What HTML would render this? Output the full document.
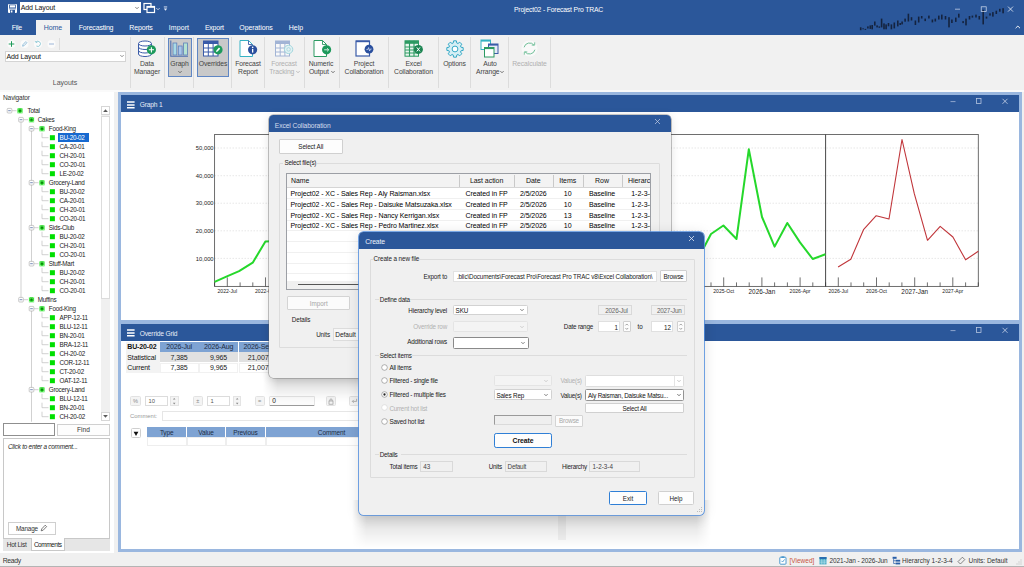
<!DOCTYPE html><html><head><meta charset="utf-8"><title>Project02 - Forecast Pro TRAC</title><style>
html,body{margin:0;padding:0}
body{width:1024px;height:567px;overflow:hidden;background:#f0f0f0;position:relative;
 font-family:"Liberation Sans",sans-serif;font-size:7px;color:#222;line-height:1}
div,span,svg{position:absolute;box-sizing:border-box}
.t{white-space:nowrap}
.c{text-align:center}
.r{text-align:right}
.w{color:#fff}
.sep{width:1px;background:#dcdcdc;top:37px;height:51px}
.rl{font-size:7.1px;color:#444;text-align:center;white-space:nowrap;line-height:8.2px}
.dis{color:#a8a8a8}
.btn{background:#fdfdfd;border:1px solid #d0d0d0;border-radius:1.5px;text-align:center;white-space:nowrap}
.tb{background:#fff;border:1px solid #dcdcdc;white-space:nowrap;overflow:hidden}
.ro{background:#f0f0f0;border:1px solid #d9d9d9;white-space:nowrap;overflow:hidden;color:#555}
.gb{border:1px solid #dcdcdc;border-radius:1px}
.gl{background:#f0f0f0;padding:0 1px;white-space:nowrap}
.tr{font-size:6.6px;white-space:nowrap;color:#222}
</style></head><body>
<div style="left:0;top:0;width:1024px;height:35px;background:#2b579a"></div>
<svg style="left:8px;top:3.6px" width="9" height="9" viewBox="0 0 9 9"><rect x="0" y="0" width="9" height="9" rx="1" fill="#fff"/><rect x="1.6" y="0.9" width="5.8" height="3" fill="none" stroke="#2b579a" stroke-width="0.8"/><rect x="2" y="5.8" width="5" height="3.2" fill="#2b579a"/><rect x="2.8" y="6.5" width="1.6" height="2" fill="#fff"/><path d="M0.9 4.9 H8.1" stroke="#2b579a" stroke-width="0.6"/></svg>
<div style="left:20px;top:2px;width:121px;height:11.2px;background:#fff;"></div>
<div class="t" style="left:20.8px;top:3.90px;font-size:7.0px;line-height:8.40px;color:#111;letter-spacing:-0.122px;">Add Layout</div>
<svg style="left:133.5px;top:5.8px" width="6" height="4" viewBox="0 0 6 4"><path d="M1.3 1 L3 2.8 L4.7 1" fill="none" stroke="#666" stroke-width="0.75"/></svg>
<svg style="left:143px;top:2px" width="13" height="12" viewBox="0 0 13 12"><rect x="1" y="1.5" width="7" height="6" fill="none" stroke="#fff" stroke-width="1.2"/><rect x="4" y="4.5" width="7.5" height="6" fill="#2b579a" stroke="#fff" stroke-width="1.2"/><rect x="4" y="4.2" width="7.5" height="1.6" fill="#fff"/></svg>
<svg style="left:155px;top:6.5px" width="6" height="4" viewBox="0 0 6 4"><path d="M1.3 1 L3 2.8 L4.7 1" fill="none" stroke="#dfe6f3" stroke-width="0.75"/></svg>
<svg style="left:163px;top:6px" width="5" height="6" viewBox="0 0 5 6"><rect x="0.8" y="0.5" width="3.4" height="0.9" fill="#e8eefa"/><path d="M0.8 2.6 L4.2 2.6 L2.5 4.8 Z" fill="#e8eefa"/></svg>
<div class="t" style="left:514px;top:5.62px;font-size:6.8px;line-height:8.16px;color:#fff;letter-spacing:-0.17px;">Project02 - Forecast Pro TRAC</div>
<div style="left:36px;top:20px;width:34px;height:16px;background:#f1f1f1"></div>
<div class="t c" style="left:-83.2px;top:23.90px;font-size:7.0px;line-height:8.40px;color:#fff;width:200px;letter-spacing:-0.245px;">File</div>
<div class="t c" style="left:-47px;top:23.90px;font-size:7.0px;line-height:8.40px;color:#2b579a;width:200px;letter-spacing:-0.093px;">Home</div>
<div class="t c" style="left:-4px;top:23.90px;font-size:7.0px;line-height:8.40px;color:#fff;width:200px;letter-spacing:-0.170px;">Forecasting</div>
<div class="t c" style="left:41px;top:23.90px;font-size:7.0px;line-height:8.40px;color:#fff;width:200px;letter-spacing:-0.173px;">Reports</div>
<div class="t c" style="left:79px;top:23.90px;font-size:7.0px;line-height:8.40px;color:#fff;width:200px;letter-spacing:0.077px;">Import</div>
<div class="t c" style="left:114.30000000000001px;top:23.90px;font-size:7.0px;line-height:8.40px;color:#fff;width:200px;letter-spacing:-0.239px;">Export</div>
<div class="t c" style="left:156px;top:23.90px;font-size:7.0px;line-height:8.40px;color:#fff;width:200px;letter-spacing:-0.094px;">Operations</div>
<div class="t c" style="left:196px;top:23.90px;font-size:7.0px;line-height:8.40px;color:#fff;width:200px;letter-spacing:-0.024px;">Help</div>
<svg style="left:0;top:0" width="1024" height="35" viewBox="0 0 1024 35"><g fill="#14233f"><rect x="859.9" y="27.3" width="1.6" height="2.9" /><rect x="862.3" y="28.3" width="1.6" height="1.0" /><rect x="864.6" y="28.9" width="1.6" height="1.0" /><rect x="867.1" y="26.4" width="1.6" height="2.1" /><rect x="869.5" y="25.4" width="1.6" height="3.5" /><rect x="871.4" y="25.0" width="1.6" height="4.3" /><rect x="874.0" y="21.5" width="1.6" height="4.1" /><rect x="876.3" y="25.4" width="1.6" height="2.0" /><rect x="878.5" y="26.4" width="1.6" height="1.4" /><rect x="880.8" y="18.6" width="1.6" height="8.8" /><rect x="883.2" y="23.4" width="1.6" height="5.9" /><rect x="885.3" y="24.4" width="1.6" height="4.9" /><rect x="887.7" y="23.0" width="1.6" height="3.3" /><rect x="890.6" y="24.4" width="1.6" height="4.9" /><rect x="893.5" y="22.5" width="1.6" height="5.9" /><rect x="897.0" y="20.5" width="1.6" height="5.9" /><rect x="899.4" y="23.0" width="1.6" height="2.0" /><rect x="901.3" y="21.5" width="1.6" height="2.9" /><rect x="904.3" y="18.6" width="1.6" height="3.1" /><rect x="907.6" y="13.7" width="1.6" height="7.8" /><rect x="910.7" y="17.2" width="1.6" height="3.3" /><rect x="914.6" y="20.5" width="1.6" height="4.5" /><rect x="917.9" y="16.6" width="1.6" height="5.9" /><rect x="920.9" y="16.0" width="1.6" height="2.5" /><rect x="924.4" y="18.6" width="1.6" height="2.5" /><rect x="928.1" y="15.6" width="1.6" height="2.9" /><rect x="931.6" y="19.5" width="1.6" height="2.9" /><rect x="934.5" y="18.6" width="1.6" height="2.9" /><rect x="938.0" y="15.6" width="1.6" height="3.9" /><rect x="941.0" y="14.6" width="1.6" height="4.9" /><rect x="944.7" y="16.0" width="1.6" height="3.5" /><rect x="948.2" y="17.2" width="1.6" height="10.2" /><rect x="951.1" y="19.5" width="1.6" height="3.5" /><rect x="955.0" y="17.6" width="1.6" height="4.3" /><rect x="958.0" y="13.7" width="1.6" height="3.9" /><rect x="962.3" y="21.1" width="1.6" height="2.0" /><rect x="965.2" y="18.6" width="1.6" height="6.8" /><rect x="968.7" y="16.0" width="1.6" height="3.5" /><rect x="971.6" y="15.6" width="1.6" height="2.0" /><rect x="975.2" y="14.6" width="1.6" height="2.9" /><rect x="978.5" y="16.0" width="1.6" height="3.5" /><rect x="982.4" y="9.8" width="1.6" height="14.6" /><rect x="985.7" y="16.6" width="1.6" height="2.0" /><rect x="989.2" y="13.3" width="1.6" height="2.3" /><rect x="992.1" y="12.1" width="1.6" height="4.5" /><rect x="995.5" y="10.7" width="1.6" height="3.3" /><rect x="999.0" y="8.8" width="1.6" height="2.9" /><rect x="1002.3" y="8.2" width="1.6" height="5.1" /></g></svg>
<svg style="left:950px;top:4px" width="74" height="28" viewBox="0 0 74 28"><path d="M5 5.2 H10" stroke="#d8e0f0" stroke-width="0.7"/><rect x="31.2" y="2.8" width="5" height="4.6" fill="none" stroke="#d8e0f0" stroke-width="0.7"/><path d="M58 2.6 L63 7.6 M63 2.6 L58 7.6" stroke="#e8edf7" stroke-width="0.8"/><path d="M65.6 24.2 L67.8 22 L70 24.2" fill="none" stroke="#fff" stroke-width="0.9"/></svg>
<div style="left:0;top:35px;width:1024px;height:55px;background:#f1f1f1"></div>
<div style="left:0;top:90px;width:1024px;height:2px;background:#fafafa"></div>
<svg style="left:5px;top:38px" width="56" height="13" viewBox="0 0 56 13"><circle cx="6.5" cy="6" r="4" fill="#fbfbfb"/><circle cx="19.5" cy="6" r="4" fill="#fbfbfb"/><circle cx="33" cy="6" r="4" fill="#fbfbfb"/><circle cx="46.5" cy="6" r="4" fill="#fbfbfb"/><path d="M6.5 3.2 V8.8 M3.7 6 H9.3" stroke="#1e9a5a" stroke-width="1"/><path d="M17.6 8.2 L18 6.6 L20.8 3.6 L21.9 4.7 L19.1 7.7 Z" fill="none" stroke="#7fb2d4" stroke-width="0.8"/><path d="M31 4 A2.6 2.6 0 1 1 31.4 8" fill="none" stroke="#7cc0cf" stroke-width="0.8"/><path d="M30.2 3 L31 4.6 L32.6 3.9" fill="none" stroke="#7cc0cf" stroke-width="0.7"/><path d="M44 6 H49" stroke="#9db6d8" stroke-width="1"/></svg>
<div style="left:59px;top:38px;width:1px;height:12px;background:#dcdcdc"></div>
<div style="left:5px;top:50.5px;width:121px;height:11px;background:#fff;border:1px solid #d4d4d4"></div>
<div class="t" style="left:6.5px;top:52.80px;font-size:7.0px;line-height:8.40px;color:#111;letter-spacing:-0.1px;">Add Layout</div>
<svg style="left:118.5px;top:54px" width="6" height="4" viewBox="0 0 6 4"><path d="M1.3 1 L3 2.8 L4.7 1" fill="none" stroke="#777" stroke-width="0.75"/></svg>
<div class="t c" style="left:-35px;top:78.80px;font-size:7px;line-height:8.40px;color:#555;width:200px;">Layouts</div>
<div class="sep" style="left:129.8px"></div>
<div class="sep" style="left:163.8px"></div>
<div class="sep" style="left:193px"></div>
<div class="sep" style="left:230.6px"></div>
<div class="sep" style="left:264.2px"></div>
<div class="sep" style="left:303.8px"></div>
<div class="sep" style="left:339px"></div>
<div class="sep" style="left:387.8px"></div>
<div class="sep" style="left:438px"></div>
<div class="sep" style="left:470.3px"></div>
<div class="sep" style="left:507.8px"></div>
<div class="sep" style="left:549.8px"></div>
<div style="left:167.5px;top:38px;width:24px;height:39px;background:#c9c9c9;border:1px solid #5f86c4"></div>
<div style="left:197px;top:38px;width:32px;height:39px;background:#c9c9c9;border:1px solid #5f86c4"></div>
<div class="t c" style="left:47px;top:59.92px;font-size:6.8px;line-height:8.16px;color:#444;width:200px;letter-spacing:-0.1px;">Data</div><div class="t c" style="left:47px;top:68.12px;font-size:6.8px;line-height:8.16px;color:#444;width:200px;letter-spacing:-0.1px;">Manager</div>
<div class="t c" style="left:79.5px;top:59.92px;font-size:6.8px;line-height:8.16px;color:#444;width:200px;letter-spacing:-0.1px;">Graph</div>
<svg style="left:176.5px;top:69.5px" width="6" height="4" viewBox="0 0 6 4"><path d="M1.3 1 L3 2.8 L4.7 1" fill="none" stroke="#555" stroke-width="0.75"/></svg>
<div class="t c" style="left:113px;top:59.92px;font-size:6.8px;line-height:8.16px;color:#444;width:200px;letter-spacing:-0.1px;">Overrides</div>
<div class="t c" style="left:148px;top:59.92px;font-size:6.8px;line-height:8.16px;color:#444;width:200px;letter-spacing:-0.1px;">Forecast</div><div class="t c" style="left:148px;top:68.12px;font-size:6.8px;line-height:8.16px;color:#444;width:200px;letter-spacing:-0.1px;">Report</div>
<div class="t c" style="left:184px;top:59.92px;font-size:6.8px;line-height:8.16px;color:#b0b0b0;width:200px;letter-spacing:-0.1px;">Forecast</div><div class="t c" style="left:181.8px;top:68.12px;font-size:6.8px;line-height:8.16px;color:#b0b0b0;width:200px;letter-spacing:-0.1px;">Tracking</div>
<svg style="left:295px;top:69.5px" width="6" height="4" viewBox="0 0 6 4"><path d="M1.3 1 L3 2.8 L4.7 1" fill="none" stroke="#b0b0b0" stroke-width="0.75"/></svg>
<div class="t c" style="left:221px;top:59.92px;font-size:6.8px;line-height:8.16px;color:#444;width:200px;letter-spacing:-0.1px;">Numeric</div><div class="t c" style="left:218.8px;top:68.12px;font-size:6.8px;line-height:8.16px;color:#444;width:200px;letter-spacing:-0.1px;">Output</div>
<svg style="left:330px;top:69.5px" width="6" height="4" viewBox="0 0 6 4"><path d="M1.3 1 L3 2.8 L4.7 1" fill="none" stroke="#555" stroke-width="0.75"/></svg>
<div class="t c" style="left:264px;top:59.92px;font-size:6.8px;line-height:8.16px;color:#444;width:200px;letter-spacing:-0.1px;">Project</div><div class="t c" style="left:264px;top:68.12px;font-size:6.8px;line-height:8.16px;color:#444;width:200px;letter-spacing:-0.1px;">Collaboration</div>
<div class="t c" style="left:313.5px;top:59.92px;font-size:6.8px;line-height:8.16px;color:#444;width:200px;letter-spacing:-0.1px;">Excel</div><div class="t c" style="left:313.5px;top:68.12px;font-size:6.8px;line-height:8.16px;color:#444;width:200px;letter-spacing:-0.1px;">Collaboration</div>
<div class="t c" style="left:354.5px;top:59.92px;font-size:6.8px;line-height:8.16px;color:#444;width:200px;letter-spacing:-0.1px;">Options</div>
<div class="t c" style="left:390px;top:59.92px;font-size:6.8px;line-height:8.16px;color:#444;width:200px;letter-spacing:-0.1px;">Auto</div><div class="t c" style="left:387.8px;top:68.12px;font-size:6.8px;line-height:8.16px;color:#444;width:200px;letter-spacing:-0.1px;">Arrange</div>
<svg style="left:498.5px;top:69.5px" width="6" height="4" viewBox="0 0 6 4"><path d="M1.3 1 L3 2.8 L4.7 1" fill="none" stroke="#555" stroke-width="0.75"/></svg>
<div class="t c" style="left:429.5px;top:59.92px;font-size:6.8px;line-height:8.16px;color:#b0b0b0;width:200px;letter-spacing:-0.1px;">Recalculate</div>
<svg style="left:136px;top:39px" width="22" height="20" viewBox="0 0 22 20"><path d="M2.5 4.5 V15 A6.5 2.5 0 0 0 15.5 15 V4.5" fill="#fff" stroke="#3a5ba8" stroke-width="1"/><path d="M2.5 8 A6.5 2.5 0 0 0 15.5 8 M2.5 11.5 A6.5 2.5 0 0 0 15.5 11.5" fill="none" stroke="#3a5ba8" stroke-width="1"/><ellipse cx="9" cy="4.5" rx="6.5" ry="2.5" fill="#fff" stroke="#3a5ba8" stroke-width="1"/><circle cx="15.4" cy="10.8" r="4.6" fill="#1d9a5c"/><path d="M15.4 8.2 V13.4 M12.8 10.8 H18" stroke="#fff" stroke-width="1.1"/></svg>
<svg style="left:169px;top:39px" width="21" height="20" viewBox="0 0 21 20"><path d="M1.8 1.5 V17.2 H19" fill="none" stroke="#4c6fb1" stroke-width="1.1"/><rect x="4" y="4" width="3.8" height="12" fill="#a9dbe6" stroke="#5d7fba" stroke-width="0.8"/><rect x="9.3" y="7" width="3.8" height="9" fill="#a9c6ea" stroke="#5d7fba" stroke-width="0.8"/><rect x="14.6" y="4" width="3.8" height="12" fill="#b5e3d2" stroke="#5d7fba" stroke-width="0.8"/></svg>
<svg style="left:202px;top:39px" width="22" height="20" viewBox="0 0 22 20"><rect x="1.5" y="2" width="14.5" height="15" fill="#fff" stroke="#3a5ba8" stroke-width="1"/><rect x="1.5" y="2" width="14.5" height="3" fill="#3a5ba8"/><path d="M6.3 2 V17 M11.1 2 V17 M1.5 9 H16 M1.5 13 H16" stroke="#3a5ba8" stroke-width="1"/><circle cx="16" cy="10.8" r="4.6" fill="#1d9a5c"/><path d="M14 13 L14.4 11.4 L17 8.6 L18.2 9.8 L15.6 12.6 Z" fill="#fff"/></svg>
<svg style="left:238px;top:39px" width="22" height="20" viewBox="0 0 22 20"><path d="M2 1.5 H10.5 L14.5 5.5 V17.5 H2 Z" fill="#fff" stroke="#36b3c4" stroke-width="1"/><path d="M10.5 1.5 V5.5 H14.5" fill="none" stroke="#3a5ba8" stroke-width="0.9"/><circle cx="14.6" cy="10.8" r="4.6" fill="#2a4f9e"/><rect x="14" y="10" width="1.3" height="3.6" fill="#fff"/><circle cx="14.65" cy="8.4" r="0.8" fill="#fff"/></svg>
<svg style="left:274px;top:39px" width="22" height="20" viewBox="0 0 22 20" opacity="0.6"><rect x="1.5" y="2" width="14" height="15" fill="#fff" stroke="#6f8cc4" stroke-width="1"/><rect x="1.5" y="2" width="14" height="3" fill="#6f8cc4"/><path d="M6.2 2 V17 M10.9 2 V17 M1.5 9 H15.5 M1.5 13 H15.5" stroke="#6f8cc4" stroke-width="1"/><circle cx="14.6" cy="10.4" r="4.2" fill="#d9f1f4" stroke="#6cc3d0" stroke-width="1"/><circle cx="14.6" cy="10.4" r="1.8" fill="none" stroke="#6cc3d0" stroke-width="0.8"/></svg>
<svg style="left:312px;top:39px" width="22" height="20" viewBox="0 0 22 20"><path d="M2 1.5 H10.5 L14.5 5.5 V17.5 H2 Z" fill="#fff" stroke="#2c9a62" stroke-width="1"/><path d="M10.5 1.5 V5.5 H14.5" fill="none" stroke="#2c9a62" stroke-width="0.9"/><circle cx="14.6" cy="10.8" r="4.6" fill="#1d9a5c"/><path d="M12.2 10.8 H16.6 M15 9.2 L16.8 10.8 L15 12.4" fill="none" stroke="#d9f2e5" stroke-width="0.9"/></svg>
<svg style="left:354px;top:39px" width="22" height="20" viewBox="0 0 22 20"><rect x="2" y="2" width="13.5" height="15" fill="#fff" stroke="#3a5ba8" stroke-width="1.2"/><rect x="2" y="1.6" width="13.5" height="1.6" fill="#3a5ba8"/><circle cx="15" cy="10.2" r="4.4" fill="#2a4f9e"/><path d="M12.4 10.6 L13.8 10.6 L14.6 8.6 L15.6 12 L16.4 10 L17.6 10" fill="none" stroke="#cfdcf5" stroke-width="0.8"/></svg>
<svg style="left:403px;top:39px" width="22" height="20" viewBox="0 0 22 20"><rect x="2" y="1.8" width="13.5" height="15.4" fill="#e8f5ee" stroke="#2c9a62" stroke-width="1"/><rect x="2" y="1.8" width="13.5" height="3" fill="#2c9a62"/><path d="M6.5 1.8 V17.2 M11 1.8 V17.2 M2 8 H15.5 M2 11 H15.5 M2 14 H15.5" stroke="#2c9a62" stroke-width="1.1"/><circle cx="15.4" cy="10.4" r="4.5" fill="#1c8552"/><path d="M13.8 8.4 L17 12.4 M17 8.4 L13.8 12.4" stroke="#fff" stroke-width="1"/></svg>
<svg style="left:444.5px;top:38.5px" width="20" height="20" viewBox="-10 -10 20 20"><polygon points="-1.83,-5.92 -1.40,-8.18 1.40,-8.18 1.83,-5.92 2.89,-5.48 4.79,-6.78 6.78,-4.79 5.48,-2.89 5.92,-1.83 8.18,-1.40 8.18,1.40 5.92,1.83 5.48,2.89 6.78,4.79 4.79,6.78 2.89,5.48 1.83,5.92 1.40,8.18 -1.40,8.18 -1.83,5.92 -2.89,5.48 -4.79,6.78 -6.78,4.79 -5.48,2.89 -5.92,1.83 -8.18,1.40 -8.18,-1.40 -5.92,-1.83 -5.48,-2.89 -6.78,-4.79 -4.79,-6.78 -2.89,-5.48" fill="#d5eff5" stroke="#35a9c6" stroke-width="1" stroke-linejoin="round"/><circle r="2.9" fill="#fff" stroke="#35a9c6" stroke-width="1"/></svg>
<svg style="left:479px;top:38px" width="22" height="21" viewBox="0 0 22 21"><rect x="2" y="2" width="9.5" height="9.5" fill="#fff" stroke="#36b3c4" stroke-width="1"/><rect x="2" y="2" width="9.5" height="1.6" fill="#36b3c4"/><rect x="9.5" y="6" width="9.5" height="9.5" fill="#e6ebf7" stroke="#3a5ba8" stroke-width="1"/><rect x="9.5" y="6" width="9.5" height="1.6" fill="#3a5ba8"/><rect x="5.5" y="9.5" width="9.5" height="9.5" fill="#fff" stroke="#2c9a62" stroke-width="1"/><rect x="5.5" y="9.5" width="9.5" height="1.6" fill="#2c9a62"/></svg>
<svg style="left:520px;top:39px" width="19" height="19" viewBox="-9.5 -9.5 19 19"><circle r="8" fill="#f9f9f9"/><path d="M-5.4 -1.2 A5.6 5.6 0 0 1 4.6 -3.2" fill="none" stroke="#6fbf98" stroke-width="1"/><path d="M5.4 1.2 A5.6 5.6 0 0 1 -4.6 3.2" fill="none" stroke="#6fbf98" stroke-width="1"/><path d="M2.2 -3.4 H5.2 V-6.2" fill="none" stroke="#6fbf98" stroke-width="0.9"/><path d="M-2.2 3.4 H-5.2 V6.2" fill="none" stroke="#6fbf98" stroke-width="0.9"/></svg>
<div style="left:0;top:92px;width:114px;height:461px;background:#fff"></div>
<div class="t" style="left:3px;top:93.74px;font-size:6.6px;line-height:7.92px;color:#333;letter-spacing:-0.15px;">Navigator</div>
<svg style="left:0;top:0" width="114" height="430" viewBox="0 0 114 430"><path d="M21 119.7 V299.7" stroke="#bdbdbd" stroke-width="0.7"/><path d="M31.5 128.7 V263.7 M31.5 308.7 V421.7" stroke="#bdbdbd" stroke-width="0.7"/><path d="M12.0 110.7 H16.5" stroke="#bdbdbd" stroke-width="0.7"/><rect x="7.2" y="108.4" width="4.6" height="4.6" rx="0.8" fill="#fff" stroke="#a6a6a6" stroke-width="0.6"/><path d="M8.2 110.7 H10.8" stroke="#3d5a9a" stroke-width="0.7"/><rect x="17.4" y="108.10000000000001" width="5.2" height="5.2" fill="#3fe03f"/><rect x="18.9" y="109.60000000000001" width="2.2" height="2.2" fill="#0a8a0a"/><path d="M17.4 108.10000000000001 l1.2 1.2 M22.6 108.10000000000001 l-1.2 1.2 M17.4 113.3 l1.2 -1.2 M22.6 113.3 l-1.2 -1.2" stroke="#e9ffe9" stroke-width="0.7"/><path d="M23.5 119.7 H28" stroke="#bdbdbd" stroke-width="0.7"/><rect x="18.7" y="117.4" width="4.6" height="4.6" rx="0.8" fill="#fff" stroke="#a6a6a6" stroke-width="0.6"/><path d="M19.7 119.7 H22.3" stroke="#3d5a9a" stroke-width="0.7"/><rect x="28.9" y="117.10000000000001" width="5.2" height="5.2" fill="#3fe03f"/><rect x="30.4" y="118.60000000000001" width="2.2" height="2.2" fill="#0a8a0a"/><path d="M28.9 117.10000000000001 l1.2 1.2 M34.1 117.10000000000001 l-1.2 1.2 M28.9 122.3 l1.2 -1.2 M34.1 122.3 l-1.2 -1.2" stroke="#e9ffe9" stroke-width="0.7"/><path d="M34.0 128.7 H38.5" stroke="#bdbdbd" stroke-width="0.7"/><rect x="29.2" y="126.39999999999999" width="4.6" height="4.6" rx="0.8" fill="#fff" stroke="#a6a6a6" stroke-width="0.6"/><path d="M30.2 128.7 H32.8" stroke="#3d5a9a" stroke-width="0.7"/><rect x="39.4" y="126.1" width="5.2" height="5.2" fill="#3fe03f"/><rect x="40.9" y="127.6" width="2.2" height="2.2" fill="#0a8a0a"/><path d="M39.4 126.1 l1.2 1.2 M44.6 126.1 l-1.2 1.2 M39.4 131.29999999999998 l1.2 -1.2 M44.6 131.29999999999998 l-1.2 -1.2" stroke="#e9ffe9" stroke-width="0.7"/><path d="M42 132.7 V137.7 H48.5" stroke="#bdbdbd" stroke-width="0.7" fill="none"/><rect x="49.9" y="135.2" width="5" height="5" fill="#00df00"/><path d="M42 141.7 V146.7 H48.5" stroke="#bdbdbd" stroke-width="0.7" fill="none"/><rect x="49.9" y="144.2" width="5" height="5" fill="#00df00"/><path d="M42 150.7 V155.7 H48.5" stroke="#bdbdbd" stroke-width="0.7" fill="none"/><rect x="49.9" y="153.2" width="5" height="5" fill="#00df00"/><path d="M42 159.7 V164.7 H48.5" stroke="#bdbdbd" stroke-width="0.7" fill="none"/><rect x="49.9" y="162.2" width="5" height="5" fill="#00df00"/><path d="M42 168.7 V173.7 H48.5" stroke="#bdbdbd" stroke-width="0.7" fill="none"/><rect x="49.9" y="171.2" width="5" height="5" fill="#00df00"/><path d="M34.0 182.7 H38.5" stroke="#bdbdbd" stroke-width="0.7"/><rect x="29.2" y="180.39999999999998" width="4.6" height="4.6" rx="0.8" fill="#fff" stroke="#a6a6a6" stroke-width="0.6"/><path d="M30.2 182.7 H32.8" stroke="#3d5a9a" stroke-width="0.7"/><rect x="39.4" y="180.1" width="5.2" height="5.2" fill="#3fe03f"/><rect x="40.9" y="181.6" width="2.2" height="2.2" fill="#0a8a0a"/><path d="M39.4 180.1 l1.2 1.2 M44.6 180.1 l-1.2 1.2 M39.4 185.29999999999998 l1.2 -1.2 M44.6 185.29999999999998 l-1.2 -1.2" stroke="#e9ffe9" stroke-width="0.7"/><path d="M42 186.7 V191.7 H48.5" stroke="#bdbdbd" stroke-width="0.7" fill="none"/><rect x="49.9" y="189.2" width="5" height="5" fill="#00df00"/><path d="M42 195.7 V200.7 H48.5" stroke="#bdbdbd" stroke-width="0.7" fill="none"/><rect x="49.9" y="198.2" width="5" height="5" fill="#00df00"/><path d="M42 204.7 V209.7 H48.5" stroke="#bdbdbd" stroke-width="0.7" fill="none"/><rect x="49.9" y="207.2" width="5" height="5" fill="#00df00"/><path d="M42 213.7 V218.7 H48.5" stroke="#bdbdbd" stroke-width="0.7" fill="none"/><rect x="49.9" y="216.2" width="5" height="5" fill="#00df00"/><path d="M34.0 227.7 H38.5" stroke="#bdbdbd" stroke-width="0.7"/><rect x="29.2" y="225.39999999999998" width="4.6" height="4.6" rx="0.8" fill="#fff" stroke="#a6a6a6" stroke-width="0.6"/><path d="M30.2 227.7 H32.8" stroke="#3d5a9a" stroke-width="0.7"/><rect x="39.4" y="225.1" width="5.2" height="5.2" fill="#3fe03f"/><rect x="40.9" y="226.6" width="2.2" height="2.2" fill="#0a8a0a"/><path d="M39.4 225.1 l1.2 1.2 M44.6 225.1 l-1.2 1.2 M39.4 230.29999999999998 l1.2 -1.2 M44.6 230.29999999999998 l-1.2 -1.2" stroke="#e9ffe9" stroke-width="0.7"/><path d="M42 231.7 V236.7 H48.5" stroke="#bdbdbd" stroke-width="0.7" fill="none"/><rect x="49.9" y="234.2" width="5" height="5" fill="#00df00"/><path d="M42 240.7 V245.7 H48.5" stroke="#bdbdbd" stroke-width="0.7" fill="none"/><rect x="49.9" y="243.2" width="5" height="5" fill="#00df00"/><path d="M42 249.7 V254.7 H48.5" stroke="#bdbdbd" stroke-width="0.7" fill="none"/><rect x="49.9" y="252.2" width="5" height="5" fill="#00df00"/><path d="M34.0 263.7 H38.5" stroke="#bdbdbd" stroke-width="0.7"/><rect x="29.2" y="261.4" width="4.6" height="4.6" rx="0.8" fill="#fff" stroke="#a6a6a6" stroke-width="0.6"/><path d="M30.2 263.7 H32.8" stroke="#3d5a9a" stroke-width="0.7"/><rect x="39.4" y="261.09999999999997" width="5.2" height="5.2" fill="#3fe03f"/><rect x="40.9" y="262.59999999999997" width="2.2" height="2.2" fill="#0a8a0a"/><path d="M39.4 261.09999999999997 l1.2 1.2 M44.6 261.09999999999997 l-1.2 1.2 M39.4 266.3 l1.2 -1.2 M44.6 266.3 l-1.2 -1.2" stroke="#e9ffe9" stroke-width="0.7"/><path d="M42 267.7 V272.7 H48.5" stroke="#bdbdbd" stroke-width="0.7" fill="none"/><rect x="49.9" y="270.2" width="5" height="5" fill="#00df00"/><path d="M42 276.7 V281.7 H48.5" stroke="#bdbdbd" stroke-width="0.7" fill="none"/><rect x="49.9" y="279.2" width="5" height="5" fill="#00df00"/><path d="M42 285.7 V290.7 H48.5" stroke="#bdbdbd" stroke-width="0.7" fill="none"/><rect x="49.9" y="288.2" width="5" height="5" fill="#00df00"/><path d="M23.5 299.7 H28" stroke="#bdbdbd" stroke-width="0.7"/><rect x="18.7" y="297.4" width="4.6" height="4.6" rx="0.8" fill="#fff" stroke="#a6a6a6" stroke-width="0.6"/><path d="M19.7 299.7 H22.3" stroke="#3d5a9a" stroke-width="0.7"/><rect x="28.9" y="297.09999999999997" width="5.2" height="5.2" fill="#3fe03f"/><rect x="30.4" y="298.59999999999997" width="2.2" height="2.2" fill="#0a8a0a"/><path d="M28.9 297.09999999999997 l1.2 1.2 M34.1 297.09999999999997 l-1.2 1.2 M28.9 302.3 l1.2 -1.2 M34.1 302.3 l-1.2 -1.2" stroke="#e9ffe9" stroke-width="0.7"/><path d="M34.0 308.7 H38.5" stroke="#bdbdbd" stroke-width="0.7"/><rect x="29.2" y="306.4" width="4.6" height="4.6" rx="0.8" fill="#fff" stroke="#a6a6a6" stroke-width="0.6"/><path d="M30.2 308.7 H32.8" stroke="#3d5a9a" stroke-width="0.7"/><rect x="39.4" y="306.09999999999997" width="5.2" height="5.2" fill="#3fe03f"/><rect x="40.9" y="307.59999999999997" width="2.2" height="2.2" fill="#0a8a0a"/><path d="M39.4 306.09999999999997 l1.2 1.2 M44.6 306.09999999999997 l-1.2 1.2 M39.4 311.3 l1.2 -1.2 M44.6 311.3 l-1.2 -1.2" stroke="#e9ffe9" stroke-width="0.7"/><path d="M42 312.7 V317.7 H48.5" stroke="#bdbdbd" stroke-width="0.7" fill="none"/><rect x="49.9" y="315.2" width="5" height="5" fill="#00df00"/><path d="M42 321.7 V326.7 H48.5" stroke="#bdbdbd" stroke-width="0.7" fill="none"/><rect x="49.9" y="324.2" width="5" height="5" fill="#00df00"/><path d="M42 330.7 V335.7 H48.5" stroke="#bdbdbd" stroke-width="0.7" fill="none"/><rect x="49.9" y="333.2" width="5" height="5" fill="#00df00"/><path d="M42 339.7 V344.7 H48.5" stroke="#bdbdbd" stroke-width="0.7" fill="none"/><rect x="49.9" y="342.2" width="5" height="5" fill="#00df00"/><path d="M42 348.7 V353.7 H48.5" stroke="#bdbdbd" stroke-width="0.7" fill="none"/><rect x="49.9" y="351.2" width="5" height="5" fill="#00df00"/><path d="M42 357.7 V362.7 H48.5" stroke="#bdbdbd" stroke-width="0.7" fill="none"/><rect x="49.9" y="360.2" width="5" height="5" fill="#00df00"/><path d="M42 366.7 V371.7 H48.5" stroke="#bdbdbd" stroke-width="0.7" fill="none"/><rect x="49.9" y="369.2" width="5" height="5" fill="#00df00"/><path d="M42 375.7 V380.7 H48.5" stroke="#bdbdbd" stroke-width="0.7" fill="none"/><rect x="49.9" y="378.2" width="5" height="5" fill="#00df00"/><path d="M34.0 389.7 H38.5" stroke="#bdbdbd" stroke-width="0.7"/><rect x="29.2" y="387.4" width="4.6" height="4.6" rx="0.8" fill="#fff" stroke="#a6a6a6" stroke-width="0.6"/><path d="M30.2 389.7 H32.8" stroke="#3d5a9a" stroke-width="0.7"/><rect x="39.4" y="387.09999999999997" width="5.2" height="5.2" fill="#3fe03f"/><rect x="40.9" y="388.59999999999997" width="2.2" height="2.2" fill="#0a8a0a"/><path d="M39.4 387.09999999999997 l1.2 1.2 M44.6 387.09999999999997 l-1.2 1.2 M39.4 392.3 l1.2 -1.2 M44.6 392.3 l-1.2 -1.2" stroke="#e9ffe9" stroke-width="0.7"/><path d="M42 393.7 V398.7 H48.5" stroke="#bdbdbd" stroke-width="0.7" fill="none"/><rect x="49.9" y="396.2" width="5" height="5" fill="#00df00"/><path d="M42 402.7 V407.7 H48.5" stroke="#bdbdbd" stroke-width="0.7" fill="none"/><rect x="49.9" y="405.2" width="5" height="5" fill="#00df00"/><path d="M42 411.7 V416.7 H48.5" stroke="#bdbdbd" stroke-width="0.7" fill="none"/><rect x="49.9" y="414.2" width="5" height="5" fill="#00df00"/></svg>
<div class="t" style="left:27.5px;top:106.92px;font-size:6.3px;line-height:7.56px;color:#222;letter-spacing:-0.23px;">Total</div>
<div class="t" style="left:37.8px;top:115.92px;font-size:6.3px;line-height:7.56px;color:#222;letter-spacing:-0.23px;">Cakes</div>
<div class="t" style="left:48.8px;top:124.92px;font-size:6.3px;line-height:7.56px;color:#222;letter-spacing:-0.23px;">Food-King</div>
<div style="left:58px;top:133.39999999999998px;width:30.5px;height:8.6px;background:#1669d0"></div>
<div class="t" style="left:59.5px;top:133.92px;font-size:6.3px;line-height:7.56px;color:#fff;letter-spacing:-0.23px;">BU-20-02</div>
<div class="t" style="left:59.5px;top:142.92px;font-size:6.3px;line-height:7.56px;color:#222;letter-spacing:-0.23px;">CA-20-01</div>
<div class="t" style="left:59.5px;top:151.92px;font-size:6.3px;line-height:7.56px;color:#222;letter-spacing:-0.23px;">CH-20-01</div>
<div class="t" style="left:59.5px;top:160.92px;font-size:6.3px;line-height:7.56px;color:#222;letter-spacing:-0.23px;">CO-20-01</div>
<div class="t" style="left:59.5px;top:169.92px;font-size:6.3px;line-height:7.56px;color:#222;letter-spacing:-0.23px;">LE-20-02</div>
<div class="t" style="left:48.8px;top:178.92px;font-size:6.3px;line-height:7.56px;color:#222;letter-spacing:-0.23px;">Grocery-Land</div>
<div class="t" style="left:59.5px;top:187.92px;font-size:6.3px;line-height:7.56px;color:#222;letter-spacing:-0.23px;">BU-20-02</div>
<div class="t" style="left:59.5px;top:196.92px;font-size:6.3px;line-height:7.56px;color:#222;letter-spacing:-0.23px;">CA-20-01</div>
<div class="t" style="left:59.5px;top:205.92px;font-size:6.3px;line-height:7.56px;color:#222;letter-spacing:-0.23px;">CH-20-01</div>
<div class="t" style="left:59.5px;top:214.92px;font-size:6.3px;line-height:7.56px;color:#222;letter-spacing:-0.23px;">CO-20-01</div>
<div class="t" style="left:48.8px;top:223.92px;font-size:6.3px;line-height:7.56px;color:#222;letter-spacing:-0.23px;">Sids-Club</div>
<div class="t" style="left:59.5px;top:232.92px;font-size:6.3px;line-height:7.56px;color:#222;letter-spacing:-0.23px;">BU-20-02</div>
<div class="t" style="left:59.5px;top:241.92px;font-size:6.3px;line-height:7.56px;color:#222;letter-spacing:-0.23px;">CH-20-01</div>
<div class="t" style="left:59.5px;top:250.92px;font-size:6.3px;line-height:7.56px;color:#222;letter-spacing:-0.23px;">CO-20-01</div>
<div class="t" style="left:48.8px;top:259.92px;font-size:6.3px;line-height:7.56px;color:#222;letter-spacing:-0.23px;">Stuff-Mart</div>
<div class="t" style="left:59.5px;top:268.92px;font-size:6.3px;line-height:7.56px;color:#222;letter-spacing:-0.23px;">BU-20-02</div>
<div class="t" style="left:59.5px;top:277.92px;font-size:6.3px;line-height:7.56px;color:#222;letter-spacing:-0.23px;">CH-20-01</div>
<div class="t" style="left:59.5px;top:286.92px;font-size:6.3px;line-height:7.56px;color:#222;letter-spacing:-0.23px;">CO-20-01</div>
<div class="t" style="left:37.8px;top:295.92px;font-size:6.3px;line-height:7.56px;color:#222;letter-spacing:-0.23px;">Muffins</div>
<div class="t" style="left:48.8px;top:304.92px;font-size:6.3px;line-height:7.56px;color:#222;letter-spacing:-0.23px;">Food-King</div>
<div class="t" style="left:59.5px;top:313.92px;font-size:6.3px;line-height:7.56px;color:#222;letter-spacing:-0.23px;">APP-12-11</div>
<div class="t" style="left:59.5px;top:322.92px;font-size:6.3px;line-height:7.56px;color:#222;letter-spacing:-0.23px;">BLU-12-11</div>
<div class="t" style="left:59.5px;top:331.92px;font-size:6.3px;line-height:7.56px;color:#222;letter-spacing:-0.23px;">BN-20-01</div>
<div class="t" style="left:59.5px;top:340.92px;font-size:6.3px;line-height:7.56px;color:#222;letter-spacing:-0.23px;">BRA-12-11</div>
<div class="t" style="left:59.5px;top:349.92px;font-size:6.3px;line-height:7.56px;color:#222;letter-spacing:-0.23px;">CH-20-02</div>
<div class="t" style="left:59.5px;top:358.92px;font-size:6.3px;line-height:7.56px;color:#222;letter-spacing:-0.23px;">COR-12-11</div>
<div class="t" style="left:59.5px;top:367.92px;font-size:6.3px;line-height:7.56px;color:#222;letter-spacing:-0.23px;">CT-20-02</div>
<div class="t" style="left:59.5px;top:376.92px;font-size:6.3px;line-height:7.56px;color:#222;letter-spacing:-0.23px;">OAT-12-11</div>
<div class="t" style="left:48.8px;top:385.92px;font-size:6.3px;line-height:7.56px;color:#222;letter-spacing:-0.23px;">Grocery-Land</div>
<div class="t" style="left:59.5px;top:394.92px;font-size:6.3px;line-height:7.56px;color:#222;letter-spacing:-0.23px;">BLU-12-11</div>
<div class="t" style="left:59.5px;top:403.92px;font-size:6.3px;line-height:7.56px;color:#222;letter-spacing:-0.23px;">BN-20-01</div>
<div class="t" style="left:59.5px;top:412.92px;font-size:6.3px;line-height:7.56px;color:#222;letter-spacing:-0.23px;">CH-20-02</div>
<div style="left:101px;top:106px;width:9px;height:315px;background:#f0f0f0"></div>
<div style="left:101px;top:106px;width:9px;height:9px;background:#fff;border:1px solid #d6d6d6"></div>
<div style="left:101px;top:412px;width:9px;height:9px;background:#fff;border:1px solid #d6d6d6"></div>
<div style="left:101px;top:116px;width:9px;height:183px;background:#fff;border:1px solid #dcdcdc"></div>
<svg style="left:101px;top:106px" width="9" height="315" viewBox="0 0 9 315"><path d="M2.1 6 L4.5 3.2 L6.9 6 Z" fill="#5a5a5a"/><path d="M2.1 309 L4.5 311.8 L6.9 309 Z" fill="#5a5a5a"/></svg>
<div style="left:3px;top:423px;width:52px;height:12.5px;background:#fff;border:1px solid #8f8f8f"></div>
<div style="left:57px;top:423.5px;width:53px;height:12px;background:#fdfdfd;border:1px solid #d0d0d0"></div>
<div class="t c" style="left:-16.5px;top:426.04px;font-size:6.6px;line-height:7.92px;color:#333;width:200px;">Find</div>
<div style="left:3px;top:438px;width:107px;height:100.5px;background:#fff;border:1px solid #c8c8c8"></div>
<div class="t" style="left:8px;top:443.12px;font-size:6.3px;line-height:7.56px;color:#222;font-style:italic;letter-spacing:-0.2px;">Click to enter a comment...</div>
<div style="left:8px;top:521.5px;width:47.5px;height:13px;background:#fff;border:1px solid #cfcfcf"></div>
<div class="t" style="left:16px;top:525.16px;font-size:6.4px;line-height:7.68px;color:#333;letter-spacing:-0.2px;">Manage</div>
<svg style="left:39.6px;top:524px" width="8" height="8" viewBox="0 0 8 8"><path d="M1.2 6.8 L1.8 4.8 L5.2 1.2 L6.6 2.6 L3.2 6.2 Z" fill="none" stroke="#444" stroke-width="0.7"/></svg>
<div style="left:3px;top:538.5px;width:107px;height:12.5px;background:#e6e6e6"></div>
<div style="left:31px;top:538px;width:34px;height:13px;background:#fff;border:1px solid #c8c8c8;border-top:none"></div>
<div class="t c" style="left:-83.4px;top:541.10px;font-size:6.5px;line-height:7.80px;color:#333;width:200px;letter-spacing:-0.292px;">Hot List</div>
<div class="t c" style="left:-52.3px;top:541.10px;font-size:6.5px;line-height:7.80px;color:#222;width:200px;letter-spacing:-0.478px;">Comments</div>
<div style="left:117.5px;top:92px;width:904.5px;height:231px;background:#9ab7df"></div>
<div style="left:120.5px;top:111.5px;width:898.5px;height:208.5px;background:#fff"></div>
<div style="left:120.5px;top:95px;width:898.5px;height:17px;background:#2b579a"></div><svg style="left:126.5px;top:100.8px" width="9" height="8" viewBox="0 0 9 8"><path d="M0 1 H7.6 M0 3.9 H7.6 M0 6.8 H7.6" stroke="#fff" stroke-width="1.5"/></svg><div class="t" style="left:139.7px;top:101.18px;font-size:6.7px;line-height:8.04px;color:#e9eef8;letter-spacing:-0.2px;">Graph 1</div><svg style="left:947.0px;top:97px" width="72" height="13" viewBox="0 0 72 13"><path d="M3.5 4.6 H8.5" stroke="#b9c7e3" stroke-width="0.7"/><rect x="29.6" y="1.6" width="4.4" height="5" fill="none" stroke="#c9d4ea" stroke-width="0.7"/><path d="M55.5 1.8 L60.5 6.8 M60.5 1.8 L55.5 6.8" stroke="#d3dcee" stroke-width="0.75"/></svg>
<svg style="left:0;top:0;font-family:'Liberation Sans',sans-serif" width="1024" height="330" viewBox="0 0 1024 330"><path d="M214.6 148 H978.3" stroke="#d4d4d4" stroke-width="0.7" stroke-dasharray="1.2 1.8"/><path d="M214.6 175.7 H978.3" stroke="#d4d4d4" stroke-width="0.7" stroke-dasharray="1.2 1.8"/><path d="M214.6 203.2 H978.3" stroke="#d4d4d4" stroke-width="0.7" stroke-dasharray="1.2 1.8"/><path d="M214.6 230.8 H978.3" stroke="#d4d4d4" stroke-width="0.7" stroke-dasharray="1.2 1.8"/><path d="M214.6 258.4 H978.3" stroke="#d4d4d4" stroke-width="0.7" stroke-dasharray="1.2 1.8"/><rect x="214.6" y="134.5" width="763.6999999999999" height="151.89999999999998" fill="none" stroke="#555" stroke-width="0.85"/><path d="M825.6 134.5 V286.4" stroke="#333" stroke-width="0.9"/><path d="M214.6 286.4 v-4 M227.3 286.4 v-9 M240.1 286.4 v-4 M252.8 286.4 v-4 M265.5 286.4 v-9 M278.2 286.4 v-4 M291.0 286.4 v-4 M303.7 286.4 v-9 M316.4 286.4 v-4 M329.2 286.4 v-4 M341.9 286.4 v-9 M354.6 286.4 v-4 M367.3 286.4 v-4 M380.1 286.4 v-9 M392.8 286.4 v-4 M405.5 286.4 v-4 M418.3 286.4 v-9 M431.0 286.4 v-4 M443.7 286.4 v-4 M456.4 286.4 v-9 M469.2 286.4 v-4 M481.9 286.4 v-4 M494.6 286.4 v-9 M507.4 286.4 v-4 M520.1 286.4 v-4 M532.8 286.4 v-9 M545.5 286.4 v-4 M558.3 286.4 v-4 M571.0 286.4 v-9 M583.7 286.4 v-4 M596.4 286.4 v-4 M609.2 286.4 v-9 M621.9 286.4 v-4 M634.6 286.4 v-4 M647.4 286.4 v-9 M660.1 286.4 v-4 M672.8 286.4 v-4 M685.5 286.4 v-9 M698.3 286.4 v-4 M711.0 286.4 v-4 M723.7 286.4 v-9 M736.5 286.4 v-4 M749.2 286.4 v-4 M761.9 286.4 v-9 M774.6 286.4 v-4 M787.4 286.4 v-4 M800.1 286.4 v-9 M812.8 286.4 v-4 M825.6 286.4 v-4 M838.3 286.4 v-9 M851.0 286.4 v-4 M863.7 286.4 v-4 M876.5 286.4 v-9 M889.2 286.4 v-4 M901.9 286.4 v-4 M914.7 286.4 v-9 M927.4 286.4 v-4 M940.1 286.4 v-4 M952.8 286.4 v-9 M965.6 286.4 v-4 M978.3 286.4 v-4" stroke="#333" stroke-width="0.7"/><polyline fill="none" stroke="#25d82b" stroke-width="2" stroke-linejoin="round" points="214.6,281.8 226.9,276.3 239.1,271.2 252.7,262.7 265.4,241.6 278,241 291,230"/><polyline fill="none" stroke="#25d82b" stroke-width="2" stroke-linejoin="round" points="685,262 698.4,258 711,234 723.4,225.5 736.5,239 748.8,149.3 762,217 774.6,246.6 787.3,223 800,242.4 812.7,259 825.4,254.3"/><polyline fill="none" stroke="#c0353a" stroke-width="1.1" stroke-linejoin="round" points="838.1,267 850.8,259.3 863.5,229.7 876.2,215.7 889,219 902,139.5 914.3,193.7 927.5,240.3 940.2,226.3 952.9,237 965.6,259.8 978.3,251.3"/><text x="213.6" y="150.1" font-size="5.8" text-anchor="end" fill="#222">50,000</text><text x="213.6" y="177.79999999999998" font-size="5.8" text-anchor="end" fill="#222">40,000</text><text x="213.6" y="205.29999999999998" font-size="5.8" text-anchor="end" fill="#222">30,000</text><text x="213.6" y="232.9" font-size="5.8" text-anchor="end" fill="#222">20,000</text><text x="213.6" y="260.5" font-size="5.8" text-anchor="end" fill="#222">10,000</text><text x="227.3" y="292.6" font-size="5.1" text-anchor="middle" fill="#222">2022-Jul</text><text x="265.5" y="292.6" font-size="5.1" text-anchor="middle" fill="#222">2022-Oct</text><text x="303.7" y="294.3" font-size="6.4" text-anchor="middle" fill="#222">2023-Jan</text><text x="723.7" y="292.6" font-size="5.1" text-anchor="middle" fill="#222">2025-Oct</text><text x="761.9" y="294.3" font-size="6.4" text-anchor="middle" fill="#222">2026-Jan</text><text x="800.1" y="292.6" font-size="5.1" text-anchor="middle" fill="#222">2026-Apr</text><text x="838.3" y="292.6" font-size="5.1" text-anchor="middle" fill="#222">2026-Jul</text><text x="876.5" y="292.6" font-size="5.1" text-anchor="middle" fill="#222">2026-Oct</text><text x="914.7" y="294.3" font-size="6.4" text-anchor="middle" fill="#222">2027-Jan</text><text x="952.8" y="292.6" font-size="5.1" text-anchor="middle" fill="#222">2027-Apr</text></svg>
<div style="left:117.5px;top:321px;width:904.5px;height:231px;background:#9ab7df"></div>
<div style="left:120.5px;top:340px;width:898.5px;height:209px;background:#fff"></div>
<div style="left:120.5px;top:323.5px;width:898.5px;height:17px;background:#2b579a"></div><svg style="left:126.5px;top:329.3px" width="9" height="8" viewBox="0 0 9 8"><path d="M0 1 H7.6 M0 3.9 H7.6 M0 6.8 H7.6" stroke="#fff" stroke-width="1.5"/></svg><div class="t" style="left:139.7px;top:329.68px;font-size:6.7px;line-height:8.04px;color:#e9eef8;letter-spacing:-0.2px;">Override Grid</div><svg style="left:947.0px;top:325.5px" width="72" height="13" viewBox="0 0 72 13"><path d="M3.5 4.6 H8.5" stroke="#b9c7e3" stroke-width="0.7"/><rect x="29.6" y="1.6" width="4.4" height="5" fill="none" stroke="#c9d4ea" stroke-width="0.7"/><path d="M55.5 1.8 L60.5 6.8 M60.5 1.8 L55.5 6.8" stroke="#d3dcee" stroke-width="0.75"/></svg>
<div style="left:125.5px;top:341.5px;width:34.5px;height:31px;background:#f3f3f3"></div>
<div class="t" style="left:127.3px;top:343.30px;font-size:7.0px;line-height:8.40px;color:#111;font-weight:bold;letter-spacing:-0.15px;">BU-20-02</div>
<div class="t" style="left:127.3px;top:353.50px;font-size:7.0px;line-height:8.40px;color:#111;letter-spacing:-0.12px;">Statistical</div>
<div class="t" style="left:127.3px;top:363.80px;font-size:7.0px;line-height:8.40px;color:#111;letter-spacing:-0.12px;">Current</div>
<div style="left:159.9px;top:341.8px;width:38.7px;height:10.2px;background:#7ea3d3"></div>
<div style="left:159.9px;top:352.3px;width:38.7px;height:10px;background:#e1e1e1"></div>
<div style="left:159.9px;top:362.6px;width:38.7px;height:10px;background:#fff;border:1px solid #f1f1f1"></div>
<div class="t c" style="left:79.1px;top:343.30px;font-size:7.0px;line-height:8.40px;color:#1c2c44;width:200px;letter-spacing:-0.12px;">2026-Jul</div>
<div class="t c" style="left:79.1px;top:353.50px;font-size:7.0px;line-height:8.40px;color:#222;width:200px;letter-spacing:-0.1px;">7,385</div>
<div class="t c" style="left:79.1px;top:363.80px;font-size:7.0px;line-height:8.40px;color:#222;width:200px;letter-spacing:-0.1px;">7,385</div>
<div style="left:199.4px;top:341.8px;width:38.7px;height:10.2px;background:#7ea3d3"></div>
<div style="left:199.4px;top:352.3px;width:38.7px;height:10px;background:#e1e1e1"></div>
<div style="left:199.4px;top:362.6px;width:38.7px;height:10px;background:#fff;border:1px solid #f1f1f1"></div>
<div class="t c" style="left:118.6px;top:343.30px;font-size:7.0px;line-height:8.40px;color:#1c2c44;width:200px;letter-spacing:-0.12px;">2026-Aug</div>
<div class="t c" style="left:118.6px;top:353.50px;font-size:7.0px;line-height:8.40px;color:#222;width:200px;letter-spacing:-0.1px;">9,965</div>
<div class="t c" style="left:118.6px;top:363.80px;font-size:7.0px;line-height:8.40px;color:#222;width:200px;letter-spacing:-0.1px;">9,965</div>
<div style="left:238.9px;top:341.8px;width:38.7px;height:10.2px;background:#7ea3d3"></div>
<div style="left:238.9px;top:352.3px;width:38.7px;height:10px;background:#e1e1e1"></div>
<div style="left:238.9px;top:362.6px;width:38.7px;height:10px;background:#fff;border:1px solid #f1f1f1"></div>
<div class="t c" style="left:158.10000000000002px;top:343.30px;font-size:7.0px;line-height:8.40px;color:#1c2c44;width:200px;letter-spacing:-0.12px;">2026-Sep</div>
<div class="t c" style="left:158.10000000000002px;top:353.50px;font-size:7.0px;line-height:8.40px;color:#222;width:200px;letter-spacing:-0.1px;">21,007</div>
<div class="t c" style="left:158.10000000000002px;top:363.80px;font-size:7.0px;line-height:8.40px;color:#222;width:200px;letter-spacing:-0.1px;">21,007</div>
<div style="left:278.4px;top:341.8px;width:38.7px;height:10.2px;background:#7ea3d3"></div>
<div style="left:278.4px;top:352.3px;width:38.7px;height:10px;background:#e1e1e1"></div>
<div style="left:278.4px;top:362.6px;width:38.7px;height:10px;background:#fff;border:1px solid #f1f1f1"></div>
<div class="t c" style="left:197.59999999999997px;top:343.30px;font-size:7.0px;line-height:8.40px;color:#1c2c44;width:200px;letter-spacing:-0.12px;">2026-Oct</div>
<div class="t c" style="left:197.59999999999997px;top:353.50px;font-size:7.0px;line-height:8.40px;color:#222;width:200px;letter-spacing:-0.1px;">19,432</div>
<div class="t c" style="left:197.59999999999997px;top:363.80px;font-size:7.0px;line-height:8.40px;color:#222;width:200px;letter-spacing:-0.1px;">19,432</div>
<div style="left:130.3px;top:395.8px;width:10.3px;height:10.4px;background:#f4f4f4;border:1px solid #e2e2e2;border-radius:1.5px"></div><div class="t c" style="left:35.45000000000002px;top:398.24px;font-size:5.6px;line-height:6.72px;color:#8a8a8a;width:200px;">%</div>
<div class="tb" style="left:145.3px;top:395.8px;width:22.6px;height:10.4px;"></div><div class="t" style="left:148.5px;top:398.12px;font-size:5.8px;line-height:6.96px;color:#555;">10</div>
<div style="left:170.4px;top:395.8px;width:8.4px;height:10.4px;background:#f4f4f4;border:1px solid #e4e4e4"></div><svg style="left:170.4px;top:395.8px" width="8.4" height="10.4" viewBox="0 0 8.4 10.4"><path d="M2.9 3.6 L4.2 2 L5.5 3.6 Z M2.9 6.8 L4.2 8.4 L5.5 6.8 Z" fill="#8a8a8a"/></svg>
<div style="left:192.6px;top:395.8px;width:10.2px;height:10.4px;background:#f4f4f4;border:1px solid #e2e2e2;border-radius:1.5px"></div><div class="t c" style="left:97.69999999999999px;top:398.24px;font-size:5.6px;line-height:6.72px;color:#8a8a8a;width:200px;">&plusmn;</div>
<div class="tb" style="left:207.4px;top:395.8px;width:22.4px;height:10.4px;"></div><div class="t" style="left:210.5px;top:398.12px;font-size:5.8px;line-height:6.96px;color:#555;">1</div>
<div style="left:232.6px;top:395.8px;width:8.4px;height:10.4px;background:#f4f4f4;border:1px solid #e4e4e4"></div><svg style="left:232.6px;top:395.8px" width="8.4" height="10.4" viewBox="0 0 8.4 10.4"><path d="M2.9 3.6 L4.2 2 L5.5 3.6 Z M2.9 6.8 L4.2 8.4 L5.5 6.8 Z" fill="#8a8a8a"/></svg>
<div style="left:254.6px;top:395.8px;width:10.3px;height:10.4px;background:#f4f4f4;border:1px solid #e2e2e2;border-radius:1.5px"></div><div class="t c" style="left:159.75px;top:398.24px;font-size:5.6px;line-height:6.72px;color:#8a8a8a;width:200px;">=</div>
<div style="left:269.4px;top:395.6px;width:45.2px;height:10.8px;background:#fbfbfb;border:1px solid #e4e4e4;border-bottom:1px solid #9a9a9a;border-radius:1.5px"></div><div class="t" style="left:272.3px;top:397.34px;font-size:6.6px;line-height:7.92px;color:#222;">0</div>
<div style="left:325.8px;top:395.8px;width:10.3px;height:10.4px;background:#f4f4f4;border:1px solid #e2e2e2;border-radius:1.5px"></div><div class="t c" style="left:230.95px;top:398.24px;font-size:5.6px;line-height:6.72px;color:#8a8a8a;width:200px;"></div>
<svg style="left:328px;top:397.5px" width="6" height="7" viewBox="0 0 6 7"><rect x="1" y="3" width="4" height="3.2" fill="none" stroke="#9a9a9a" stroke-width="0.7"/><path d="M1.9 3 V2 A1.1 1.1 0 0 1 4.1 2 V3" fill="none" stroke="#9a9a9a" stroke-width="0.7"/></svg>
<div style="left:348.5px;top:395.8px;width:10.3px;height:10.4px;background:#f4f4f4;border:1px solid #e2e2e2;border-radius:1.5px"></div><div class="t c" style="left:253.64999999999998px;top:398.24px;font-size:5.6px;line-height:6.72px;color:#8a8a8a;width:200px;"></div>
<svg style="left:350.5px;top:398px" width="7" height="6" viewBox="0 0 7 6"><path d="M5.6 0.8 V3.4 H1.4 M2.8 1.9 L1.3 3.4 L2.8 4.9" fill="none" stroke="#9a9a9a" stroke-width="0.7"/></svg>
<div class="t" style="left:130px;top:413.06px;font-size:5.9px;line-height:7.08px;color:#9a9a9a;">Comment:</div>
<div style="left:162.4px;top:410.8px;width:530px;height:10.6px;background:#fff;border:1px solid #e6e6e6"></div>
<div style="left:130.9px;top:427.6px;width:9.8px;height:10.4px;background:#fff;border:1px solid #cfcfcf;border-radius:1.5px"></div>
<svg style="left:132.8px;top:430.5px" width="6" height="6" viewBox="0 0 6 6"><path d="M0.6 0.8 H5.4 L3 5 Z" fill="#111"/></svg>
<div style="left:147px;top:427px;width:39.4px;height:10px;background:#7ea3d3"></div>
<div class="t c" style="left:66.69999999999999px;top:428.80px;font-size:6.5px;line-height:7.80px;color:#1c2c44;width:200px;letter-spacing:-0.12px;">Type</div>
<div style="left:147px;top:437.3px;width:39.8px;height:9px;background:#fff;border:1px solid #eeeeee"></div>
<div style="left:186.7px;top:427px;width:38.6px;height:10px;background:#7ea3d3"></div>
<div class="t c" style="left:106.0px;top:428.80px;font-size:6.5px;line-height:7.80px;color:#1c2c44;width:200px;letter-spacing:-0.12px;">Value</div>
<div style="left:186.7px;top:437.3px;width:39.0px;height:9px;background:#fff;border:1px solid #eeeeee"></div>
<div style="left:225.6px;top:427px;width:39.6px;height:10px;background:#7ea3d3"></div>
<div class="t c" style="left:145.4px;top:428.80px;font-size:6.5px;line-height:7.80px;color:#1c2c44;width:200px;letter-spacing:-0.12px;">Previous</div>
<div style="left:225.6px;top:437.3px;width:40.0px;height:9px;background:#fff;border:1px solid #eeeeee"></div>
<div style="left:265.5px;top:427px;width:132px;height:10px;background:#7ea3d3"></div>
<div class="t c" style="left:231.5px;top:428.80px;font-size:6.5px;line-height:7.80px;color:#1c2c44;width:200px;letter-spacing:-0.12px;">Comment</div>
<div style="left:265.5px;top:437.3px;width:132.4px;height:9px;background:#fff;border:1px solid #eeeeee"></div>
<div style="left:263px;top:366px;width:413.5px;height:36px;background:linear-gradient(to bottom,rgba(0,0,0,0.17) 0,rgba(0,0,0,0.17) 34%,rgba(0,0,0,0.10) 55%,rgba(0,0,0,0.03) 82%,rgba(0,0,0,0) 100%);-webkit-mask-image:linear-gradient(to right,transparent 0,#000 3.5%,#000 96.5%,transparent 100%);mask-image:linear-gradient(to right,transparent 0,#000 3.5%,#000 96.5%,transparent 100%)"></div>
<div style="left:268.5px;top:114.5px;width:402.5px;height:263.5px;background:#f0f0f0;border-radius:4.5px;box-shadow:0 0 0 0.6px rgba(90,90,90,0.6), 0 1px 10px rgba(0,0,0,0.12);overflow:hidden"><div style="left:0px;top:0px;width:402.5px;height:17.2px;background:#2b579a"></div></div>
<div class="t" style="left:274.8px;top:121.68px;font-size:6.7px;line-height:8.04px;color:#d5ddee;letter-spacing:-0.1px;">Excel Collaboration</div>
<svg style="left:654px;top:117.5px" width="7" height="7" viewBox="0 0 7 7"><path d="M1 1 L6 6 M6 1 L1 6" stroke="#c6d0e6" stroke-width="0.7"/></svg>
<div style="left:279px;top:139px;width:63.5px;height:14.5px;background:#fdfdfd;border:1px solid #d0d0d0;border-radius:1px"></div>
<div class="t c" style="left:210.8px;top:142.92px;font-size:6.3px;line-height:7.56px;color:#222;width:200px;letter-spacing:-0.1px;">Select All</div>
<div class="gb" style="left:279.4px;top:162.5px;width:380.4px;height:185px;"></div>
<div style="left:283px;top:158px;width:34px;height:8px;background:#f0f0f0"></div>
<div class="t" style="left:284.4px;top:158.62px;font-size:6.3px;line-height:7.56px;color:#222;letter-spacing:-0.2px;">Select file(s)</div>
<div style="left:286.3px;top:173px;width:364.5px;height:116.5px;background:#fff;border:1px solid #9c9fa5"></div>
<div style="left:287.3px;top:174px;width:362.5px;height:13.5px;background:#f3f3f3;border-bottom:1px solid #d5d5d5"></div>
<div style="left:459.4px;top:174.5px;width:1px;height:12.5px;background:#c9c9c9"></div>
<div style="left:513.8px;top:174.5px;width:1px;height:12.5px;background:#c9c9c9"></div>
<div style="left:552.9px;top:174.5px;width:1px;height:12.5px;background:#c9c9c9"></div>
<div style="left:582.5px;top:174.5px;width:1px;height:12.5px;background:#c9c9c9"></div>
<div style="left:621.8px;top:174.5px;width:1px;height:12.5px;background:#c9c9c9"></div>
<div class="t" style="left:291px;top:177.16px;font-size:6.9px;line-height:8.28px;color:#111;">Name</div>
<div class="t c" style="left:386.6px;top:177.10px;font-size:7.0px;line-height:8.40px;color:#111;width:200px;letter-spacing:-0.05px;">Last action</div>
<div class="t c" style="left:433.29999999999995px;top:177.10px;font-size:7.0px;line-height:8.40px;color:#111;width:200px;letter-spacing:-0.05px;">Date</div>
<div class="t c" style="left:467.70000000000005px;top:177.10px;font-size:7.0px;line-height:8.40px;color:#111;width:200px;letter-spacing:-0.05px;">Items</div>
<div class="t c" style="left:502px;top:177.10px;font-size:7.0px;line-height:8.40px;color:#111;width:200px;letter-spacing:-0.05px;">Row</div>
<div style="left:627.5px;top:175px;width:22px;height:12px;overflow:hidden"><div class="t" style="left:0.5px;top:2.10px;font-size:7.0px;line-height:8.40px;color:#111;letter-spacing:-0.05px;">Hierarchy</div></div>
<div class="t" style="left:290.5px;top:190.10px;font-size:7.0px;line-height:8.40px;color:#000;letter-spacing:-0.08px;">Project02 - XC - Sales Rep - Aly Raisman.xlsx</div>
<div class="t c" style="left:386.6px;top:190.10px;font-size:7.0px;line-height:8.40px;color:#000;width:200px;letter-spacing:-0.08px;">Created in FP</div>
<div class="t c" style="left:433.29999999999995px;top:190.10px;font-size:7.0px;line-height:8.40px;color:#000;width:200px;letter-spacing:-0.08px;">2/5/2026</div>
<div class="t c" style="left:467.70000000000005px;top:190.10px;font-size:7.0px;line-height:8.40px;color:#000;width:200px;">10</div>
<div class="t c" style="left:502px;top:190.10px;font-size:7.0px;line-height:8.40px;color:#000;width:200px;letter-spacing:-0.08px;">Baseline</div>
<div style="left:630px;top:188.6px;width:19.8px;height:10px;overflow:hidden"><div class="t" style="left:1.2px;top:1.50px;font-size:7.0px;line-height:8.40px;color:#000;">1-2-3-4</div></div>
<div class="t" style="left:290.5px;top:200.80px;font-size:7.0px;line-height:8.40px;color:#000;letter-spacing:-0.08px;">Project02 - XC - Sales Rep - Daisuke Matsuzaka.xlsx</div>
<div class="t c" style="left:386.6px;top:200.80px;font-size:7.0px;line-height:8.40px;color:#000;width:200px;letter-spacing:-0.08px;">Created in FP</div>
<div class="t c" style="left:433.29999999999995px;top:200.80px;font-size:7.0px;line-height:8.40px;color:#000;width:200px;letter-spacing:-0.08px;">2/5/2026</div>
<div class="t c" style="left:467.70000000000005px;top:200.80px;font-size:7.0px;line-height:8.40px;color:#000;width:200px;">10</div>
<div class="t c" style="left:502px;top:200.80px;font-size:7.0px;line-height:8.40px;color:#000;width:200px;letter-spacing:-0.08px;">Baseline</div>
<div style="left:630px;top:199.29999999999998px;width:19.8px;height:10px;overflow:hidden"><div class="t" style="left:1.2px;top:1.50px;font-size:7.0px;line-height:8.40px;color:#000;">1-2-3-4</div></div>
<div class="t" style="left:290.5px;top:211.50px;font-size:7.0px;line-height:8.40px;color:#000;letter-spacing:-0.08px;">Project02 - XC - Sales Rep - Nancy Kerrigan.xlsx</div>
<div class="t c" style="left:386.6px;top:211.50px;font-size:7.0px;line-height:8.40px;color:#000;width:200px;letter-spacing:-0.08px;">Created in FP</div>
<div class="t c" style="left:433.29999999999995px;top:211.50px;font-size:7.0px;line-height:8.40px;color:#000;width:200px;letter-spacing:-0.08px;">2/5/2026</div>
<div class="t c" style="left:467.70000000000005px;top:211.50px;font-size:7.0px;line-height:8.40px;color:#000;width:200px;">13</div>
<div class="t c" style="left:502px;top:211.50px;font-size:7.0px;line-height:8.40px;color:#000;width:200px;letter-spacing:-0.08px;">Baseline</div>
<div style="left:630px;top:210.0px;width:19.8px;height:10px;overflow:hidden"><div class="t" style="left:1.2px;top:1.50px;font-size:7.0px;line-height:8.40px;color:#000;">1-2-3-4</div></div>
<div class="t" style="left:290.5px;top:222.20px;font-size:7.0px;line-height:8.40px;color:#000;letter-spacing:-0.08px;">Project02 - XC - Sales Rep - Pedro Martinez.xlsx</div>
<div class="t c" style="left:386.6px;top:222.20px;font-size:7.0px;line-height:8.40px;color:#000;width:200px;letter-spacing:-0.08px;">Created in FP</div>
<div class="t c" style="left:433.29999999999995px;top:222.20px;font-size:7.0px;line-height:8.40px;color:#000;width:200px;letter-spacing:-0.08px;">2/5/2026</div>
<div class="t c" style="left:467.70000000000005px;top:222.20px;font-size:7.0px;line-height:8.40px;color:#000;width:200px;">10</div>
<div class="t c" style="left:502px;top:222.20px;font-size:7.0px;line-height:8.40px;color:#000;width:200px;letter-spacing:-0.08px;">Baseline</div>
<div style="left:630px;top:220.7px;width:19.8px;height:10px;overflow:hidden"><div class="t" style="left:1.2px;top:1.50px;font-size:7.0px;line-height:8.40px;color:#000;">1-2-3-4</div></div>
<div style="left:287.3px;top:198.29999999999998px;width:362.5px;height:0.6px;background:#f0f0f0"></div>
<div style="left:287.3px;top:209.0px;width:362.5px;height:0.6px;background:#f0f0f0"></div>
<div style="left:287.3px;top:219.7px;width:362.5px;height:0.6px;background:#f0f0f0"></div>
<div style="left:287.3px;top:230.39999999999998px;width:362.5px;height:0.6px;background:#f0f0f0"></div>
<div style="left:287.3px;top:241.1px;width:362.5px;height:0.6px;background:#f0f0f0"></div>
<div style="left:287.3px;top:251.79999999999998px;width:362.5px;height:0.6px;background:#f0f0f0"></div>
<div style="left:287.3px;top:262.5px;width:362.5px;height:0.6px;background:#f0f0f0"></div>
<div style="left:287.3px;top:273.2px;width:362.5px;height:0.6px;background:#f0f0f0"></div>
<div style="left:287.3px;top:281px;width:362.5px;height:7.5px;background:#f0f0f0"></div>
<div style="left:297.5px;top:283.6px;width:330px;height:0.9px;background:#555"></div>
<div style="left:287.2px;top:296.2px;width:63.3px;height:14.2px;background:#fbfbfb;border:1px solid #d4d4d4;border-radius:1px"></div>
<div class="t c" style="left:218.8px;top:299.92px;font-size:6.3px;line-height:7.56px;color:#a5a5a5;width:200px;">Import</div>
<div class="t" style="left:291.8px;top:316.32px;font-size:6.3px;line-height:7.56px;color:#222;letter-spacing:-0.1px;">Details</div>
<div class="t r" style="left:130px;top:331.32px;font-size:6.3px;line-height:7.56px;color:#222;width:200px;letter-spacing:-0.1px;">Units</div>
<div style="left:333px;top:328.3px;width:60px;height:12.4px;background:#f7f7f7;border:1px solid #dcdcdc"></div>
<div class="t" style="left:335.2px;top:331.20px;font-size:6.5px;line-height:7.80px;color:#222;">Default</div>
<div style="left:352px;top:500px;width:359px;height:48px;background:linear-gradient(to bottom,rgba(0,0,0,0.16) 0,rgba(0,0,0,0.16) 32%,rgba(0,0,0,0.086) 58%,rgba(0,0,0,0.024) 88%,rgba(0,0,0,0) 100%);-webkit-mask-image:linear-gradient(to right,transparent 0,#000 4%,#000 96%,transparent 100%);mask-image:linear-gradient(to right,transparent 0,#000 4%,#000 96%,transparent 100%)"></div>
<div style="left:558px;top:515px;width:8px;height:25px;background:rgba(0,0,0,0.045)"></div>
<div style="left:358.8px;top:231.5px;width:345.4px;height:283.2px;background:#f0f0f0;border-radius:4.5px;box-shadow:0 0 0 0.8px #4f8ddf, 0 2px 14px rgba(0,0,0,0.13);overflow:hidden"><div style="left:0px;top:0px;width:345.4px;height:17.3px;background:#2b579a"></div></div>
<div class="t" style="left:365.2px;top:238.22px;font-size:6.8px;line-height:8.16px;color:#eef2fa;letter-spacing:-0.1px;">Create</div>
<svg style="left:688px;top:234.8px" width="7" height="7" viewBox="0 0 7 7"><path d="M1 1 L6 6 M6 1 L1 6" stroke="#e6ecf7" stroke-width="0.8"/></svg>
<div class="gb" style="left:369.8px;top:259.2px;width:324.8px;height:219.2px;"></div>
<div style="left:372.5px;top:255px;width:44px;height:8px;background:#f0f0f0"></div>
<div class="t" style="left:373.6px;top:255.32px;font-size:6.3px;line-height:7.56px;color:#222;letter-spacing:-0.1px;">Create a new file</div>
<div class="t r" style="left:247px;top:272.62px;font-size:6.3px;line-height:7.56px;color:#222;width:200px;letter-spacing:-0.2px;">Export to</div>
<div style="left:453.4px;top:271.2px;width:203.2px;height:10.6px;background:#fff;border:1px solid #e2e2e2;overflow:hidden"><div class="t" style="left:2.5px;top:1.22px;font-size:6.3px;line-height:7.56px;color:#222;letter-spacing:-0.14px;">.blic\Documents\Forecast Pro\Forecast Pro TRAC v8\Excel Collaboration\</div></div>
<div style="left:659.6px;top:270.3px;width:27.8px;height:12px;background:#fdfdfd;border:1px solid #d0d0d0;border-radius:1px"></div>
<div class="t c" style="left:573.5px;top:272.92px;font-size:6.3px;line-height:7.56px;color:#222;width:200px;letter-spacing:-0.2px;">Browse</div>
<div style="left:375px;top:298.6px;width:312px;height:0.8px;background:#dcdcdc"></div>
<div style="left:378.5px;top:295px;width:31px;height:8px;background:#f0f0f0"></div>
<div class="t" style="left:379.8px;top:295.72px;font-size:6.3px;line-height:7.56px;color:#222;letter-spacing:-0.2px;">Define data</div>
<div class="t r" style="left:247px;top:306.92px;font-size:6.3px;line-height:7.56px;color:#222;width:200px;letter-spacing:-0.2px;">Hierarchy level</div>
<div style="left:453.4px;top:304.7px;width:75px;height:10.6px;background:#fff;border:1px solid #d2d2d2;border-radius:1.5px"></div><div class="t" style="left:455.59999999999997px;top:306.72px;font-size:6.3px;line-height:7.56px;color:#111;letter-spacing:-0.15px;">SKU</div><svg style="left:519.4px;top:308.2px" width="6" height="4" viewBox="0 0 6 4"><path d="M1.3 1 L3 2.8 L4.7 1" fill="none" stroke="#666" stroke-width="0.75"/></svg>
<div class="ro" style="left:598.4px;top:304.7px;width:33.3px;height:10.6px;"></div>
<div class="t r" style="left:427.79999999999995px;top:306.72px;font-size:6.3px;line-height:7.56px;color:#666;width:200px;letter-spacing:-0.2px;">2026-Jul</div>
<div class="ro" style="left:651.3px;top:304.7px;width:34.2px;height:10.6px;"></div>
<div class="t r" style="left:481.6px;top:306.72px;font-size:6.3px;line-height:7.56px;color:#666;width:200px;letter-spacing:-0.2px;">2027-Jun</div>
<div class="t r" style="left:247px;top:322.72px;font-size:6.3px;line-height:7.56px;color:#b0b0b0;width:200px;letter-spacing:-0.2px;">Override row</div>
<div style="left:453.4px;top:321.2px;width:75px;height:10.6px;background:#f4f4f4;border:1px solid #e4e4e4;border-radius:1.5px"></div><svg style="left:519.4px;top:324.7px" width="6" height="4" viewBox="0 0 6 4"><path d="M1.3 1 L3 2.8 L4.7 1" fill="none" stroke="#c4c4c4" stroke-width="0.75"/></svg>
<div class="t r" style="left:393px;top:323.32px;font-size:6.3px;line-height:7.56px;color:#222;width:200px;letter-spacing:-0.2px;">Date range</div>
<div style="left:598.4px;top:321px;width:22px;height:11.4px;background:#fff;border:1px solid #e0e0e0"></div>
<div class="t r" style="left:418px;top:323.52px;font-size:6.3px;line-height:7.56px;color:#222;width:200px;">1</div>
<div style="left:623.4px;top:321px;width:7.6px;height:11.4px;background:#fdfdfd;border:1px solid #d0d0d0;border-radius:1px"></div><svg style="left:623.4px;top:321px" width="7.6" height="11.4" viewBox="0 0 7.6 11.4"><path d="M2.4 4.4 L3.8 3 L5.2 4.4 M2.4 7 L3.8 8.4 L5.2 7" fill="none" stroke="#666" stroke-width="0.6"/></svg>
<div class="t" style="left:637.5px;top:323.12px;font-size:6.3px;line-height:7.56px;color:#222;">to</div>
<div style="left:651.3px;top:321px;width:22px;height:11.4px;background:#fff;border:1px solid #e0e0e0"></div>
<div class="t r" style="left:471px;top:323.52px;font-size:6.3px;line-height:7.56px;color:#222;width:200px;">12</div>
<div style="left:677.2px;top:321px;width:7.6px;height:11.4px;background:#fdfdfd;border:1px solid #d0d0d0;border-radius:1px"></div><svg style="left:677.2px;top:321px" width="7.6" height="11.4" viewBox="0 0 7.6 11.4"><path d="M2.4 4.4 L3.8 3 L5.2 4.4 M2.4 7 L3.8 8.4 L5.2 7" fill="none" stroke="#666" stroke-width="0.6"/></svg>
<div class="t r" style="left:247px;top:338.42px;font-size:6.3px;line-height:7.56px;color:#222;width:200px;letter-spacing:-0.2px;">Additional rows</div>
<div style="left:453.4px;top:337px;width:75.2px;height:11.5px;background:#fff;border:1px solid #8a8a8a;border-radius:1.5px"></div><svg style="left:519.6px;top:340.95px" width="6" height="4" viewBox="0 0 6 4"><path d="M1.3 1 L3 2.8 L4.7 1" fill="none" stroke="#666" stroke-width="0.75"/></svg>
<div style="left:375px;top:354.8px;width:312px;height:0.8px;background:#dcdcdc"></div>
<div style="left:378.5px;top:351px;width:33px;height:8px;background:#f0f0f0"></div>
<div class="t" style="left:379.8px;top:351.92px;font-size:6.3px;line-height:7.56px;color:#222;letter-spacing:-0.2px;">Select items</div>
<svg style="left:380.5px;top:363.5px" width="7" height="7" viewBox="-3.5 -3.5 7 7"><circle r="2.8" fill="#fff" stroke="#6a6a6a" stroke-width="0.5"/></svg>
<div class="t" style="left:389.4px;top:363.62px;font-size:6.3px;line-height:7.56px;color:#222;letter-spacing:-0.2px;">All items</div>
<svg style="left:380.5px;top:377.1px" width="7" height="7" viewBox="-3.5 -3.5 7 7"><circle r="2.8" fill="#fff" stroke="#6a6a6a" stroke-width="0.5"/></svg>
<div class="t" style="left:389.4px;top:377.22px;font-size:6.3px;line-height:7.56px;color:#222;letter-spacing:-0.2px;">Filtered - single file</div>
<svg style="left:380.5px;top:390.8px" width="7" height="7" viewBox="-3.5 -3.5 7 7"><circle r="2.8" fill="#fff" stroke="#6a6a6a" stroke-width="0.5"/><circle r="1.15" fill="#222"/></svg>
<div class="t" style="left:389.4px;top:390.92px;font-size:6.3px;line-height:7.56px;color:#222;letter-spacing:-0.2px;">Filtered - multiple files</div>
<svg style="left:380.5px;top:404.4px" width="7" height="7" viewBox="-3.5 -3.5 7 7"><circle r="2.8" fill="#fff" stroke="#cccccc" stroke-width="0.5"/></svg>
<div class="t" style="left:389.4px;top:404.52px;font-size:6.3px;line-height:7.56px;color:#b0b0b0;letter-spacing:-0.2px;">Current hot list</div>
<svg style="left:380.5px;top:418.1px" width="7" height="7" viewBox="-3.5 -3.5 7 7"><circle r="2.8" fill="#fff" stroke="#6a6a6a" stroke-width="0.5"/></svg>
<div class="t" style="left:389.4px;top:418.22px;font-size:6.3px;line-height:7.56px;color:#222;letter-spacing:-0.2px;">Saved hot list</div>
<div style="left:494.2px;top:375.2px;width:58.1px;height:10.6px;background:#f4f4f4;border:1px solid #e4e4e4;border-radius:1.5px"></div><svg style="left:543.3px;top:378.7px" width="6" height="4" viewBox="0 0 6 4"><path d="M1.3 1 L3 2.8 L4.7 1" fill="none" stroke="#c4c4c4" stroke-width="0.75"/></svg>
<div class="t" style="left:560.4px;top:376.92px;font-size:6.3px;line-height:7.56px;color:#b0b0b0;letter-spacing:-0.2px;">Value(s)</div>
<div style="left:585.1px;top:374.8px;width:98.9px;height:12px;background:#fff;border:1px solid #dedede;border-radius:1.5px"></div>
<div style="left:673.6px;top:375.8px;width:0.8px;height:10px;background:#e4e4e4"></div>
<svg style="left:676px;top:379.2px" width="6" height="4" viewBox="0 0 6 4"><path d="M1.3 1 L3 2.8 L4.7 1" fill="none" stroke="#b8b8b8" stroke-width="0.75"/></svg>
<div style="left:494.2px;top:389.4px;width:58.1px;height:11px;background:#fff;border:1px solid #d2d2d2;border-radius:1.5px"></div><div class="t" style="left:496.4px;top:391.62px;font-size:6.3px;line-height:7.56px;color:#111;letter-spacing:-0.15px;">Sales Rep</div><svg style="left:543.3px;top:393.09999999999997px" width="6" height="4" viewBox="0 0 6 4"><path d="M1.3 1 L3 2.8 L4.7 1" fill="none" stroke="#666" stroke-width="0.75"/></svg>
<div class="t" style="left:560.4px;top:391.62px;font-size:6.3px;line-height:7.56px;color:#222;letter-spacing:-0.2px;">Value(s)</div>
<div style="left:585.1px;top:389.1px;width:98.9px;height:11.5px;background:#fff;border:1px solid #949494;border-radius:1.5px"></div>
<div class="t" style="left:588px;top:391.72px;font-size:6.3px;line-height:7.56px;color:#111;letter-spacing:-0.2px;">Aly Raisman, Daisuke Matsu...</div>
<svg style="left:676px;top:393.2px" width="6" height="4" viewBox="0 0 6 4"><path d="M1.3 1 L3 2.8 L4.7 1" fill="none" stroke="#555" stroke-width="0.75"/></svg>
<div style="left:585.1px;top:402.6px;width:98.9px;height:10.8px;background:#fdfdfd;border:1px solid #d0d0d0;border-radius:1px"></div>
<div class="t c" style="left:534.5px;top:404.82px;font-size:6.3px;line-height:7.56px;color:#222;width:200px;letter-spacing:-0.2px;">Select All</div>
<div style="left:494.2px;top:414.5px;width:58px;height:10.8px;background:#efefef;border:1px solid #dadada;border-top:1px solid #9a9a9a;border-left:1px solid #9a9a9a"></div>
<div style="left:554.8px;top:414.5px;width:28.1px;height:12px;background:#fbfbfb;border:1px solid #d4d4d4;border-radius:1px"></div>
<div class="t c" style="left:469px;top:417.22px;font-size:6.3px;line-height:7.56px;color:#a8a8a8;width:200px;letter-spacing:-0.2px;">Browse</div>
<div style="left:494.2px;top:432.5px;width:57.8px;height:15px;background:#fdfdfd;border:1px solid #2f7fd6;border-radius:2.2px"></div>
<div class="t c" style="left:423px;top:437.06px;font-size:6.9px;line-height:8.28px;color:#111;width:200px;font-weight:bold;letter-spacing:-0.1px;">Create</div>
<div style="left:375px;top:454.3px;width:312px;height:0.8px;background:#dcdcdc"></div>
<div style="left:378.5px;top:450.5px;width:22px;height:8px;background:#f0f0f0"></div>
<div class="t" style="left:379.7px;top:451.42px;font-size:6.3px;line-height:7.56px;color:#222;letter-spacing:-0.2px;">Details</div>
<div class="t" style="left:389.6px;top:463.02px;font-size:6.3px;line-height:7.56px;color:#222;letter-spacing:-0.2px;">Total items</div>
<div class="ro" style="left:420.2px;top:461.3px;width:33.3px;height:11.1px;"></div>
<div class="t" style="left:423.2px;top:463.02px;font-size:6.3px;line-height:7.56px;color:#444;">43</div>
<div class="t" style="left:488.7px;top:463.02px;font-size:6.3px;line-height:7.56px;color:#222;letter-spacing:-0.2px;">Units</div>
<div class="ro" style="left:504.6px;top:461.3px;width:42.1px;height:11.1px;"></div>
<div class="t" style="left:507.6px;top:463.02px;font-size:6.3px;line-height:7.56px;color:#444;letter-spacing:-0.2px;">Default</div>
<div class="t" style="left:561.9px;top:463.02px;font-size:6.3px;line-height:7.56px;color:#222;letter-spacing:-0.2px;">Hierarchy</div>
<div class="ro" style="left:589.3px;top:461.3px;width:50.3px;height:11.1px;"></div>
<div class="t" style="left:592.6px;top:463.02px;font-size:6.3px;line-height:7.56px;color:#444;">1-2-3-4</div>
<div style="left:609.3px;top:491.3px;width:37.4px;height:13.3px;background:#fdfdfd;border:1px solid #2f7fd6;border-radius:1.5px"></div>
<div class="t c" style="left:528px;top:494.62px;font-size:6.3px;line-height:7.56px;color:#222;width:200px;">Exit</div>
<div style="left:657.8px;top:491.3px;width:36.6px;height:13.3px;background:#fdfdfd;border:1px solid #d0d0d0;border-radius:1.5px"></div>
<div class="t c" style="left:576px;top:494.62px;font-size:6.3px;line-height:7.56px;color:#222;width:200px;">Help</div>
<svg style="left:695.5px;top:506px" width="7" height="7" viewBox="0 0 7 7"><g fill="#bdbdbd"><rect x="5" y="1" width="1" height="1"/><rect x="5" y="3" width="1" height="1"/><rect x="5" y="5" width="1" height="1"/><rect x="3" y="3" width="1" height="1"/><rect x="3" y="5" width="1" height="1"/><rect x="1" y="5" width="1" height="1"/></g></svg>
<div style="left:0;top:553px;width:1024px;height:14px;background:#f0f0f0"></div>
<div class="t" style="left:2.8px;top:556.82px;font-size:6.8px;line-height:8.16px;color:#333;letter-spacing:-0.331px;">Ready</div>
<div style="left:0px;top:566px;width:1024px;height:1px;background:#b4b4b4"></div>
<svg style="left:779px;top:555.5px" width="8" height="9" viewBox="0 0 8 9"><rect x="0.8" y="1.2" width="6.2" height="7" rx="0.8" fill="#fff" stroke="#3b8fc9" stroke-width="0.9"/><path d="M2.4 4.8 L3.6 6 L5.6 3.4" fill="none" stroke="#3b8fc9" stroke-width="0.8"/><rect x="2.4" y="0.4" width="3" height="1.4" fill="#3b8fc9"/></svg>
<div class="t" style="left:789.5px;top:556.60px;font-size:6.5px;line-height:7.80px;color:#c8503c;">[Viewed]</div>
<svg style="left:819px;top:555.5px" width="8" height="9" viewBox="0 0 8 9"><rect x="0.5" y="1" width="7" height="7.4" fill="#3fa7c4"/><rect x="0.5" y="1" width="7" height="2" fill="#2a6fb0"/><path d="M2.8 3 V8.4 M5.2 3 V8.4 M0.5 5 H7.5 M0.5 6.8 H7.5" stroke="#dff2f7" stroke-width="0.5"/></svg>
<div class="t" style="left:829.5px;top:556.60px;font-size:6.5px;line-height:7.80px;color:#333;letter-spacing:-0.1px;">2021-Jan - 2026-Jun</div>
<svg style="left:892px;top:555.5px" width="9" height="9" viewBox="0 0 9 9"><rect x="0.6" y="0.8" width="4" height="2" fill="#2a5fa8"/><rect x="3.6" y="3.8" width="4.6" height="1.8" fill="#2a5fa8"/><rect x="3.6" y="6.6" width="4.6" height="1.8" fill="#2a5fa8"/><path d="M1.6 2.8 V7.5 H3.6 M1.6 4.7 H3.6" fill="none" stroke="#2a5fa8" stroke-width="0.7"/></svg>
<div class="t" style="left:902px;top:556.60px;font-size:6.5px;line-height:7.80px;color:#333;">Hierarchy 1-2-3-4</div>
<svg style="left:957px;top:555.5px" width="9" height="9" viewBox="0 0 9 9"><path d="M1 5.6 L5.4 1.2 L7.8 3.6 L3.4 8 Z" fill="none" stroke="#555" stroke-width="0.7"/></svg>
<div class="t" style="left:968.5px;top:556.60px;font-size:6.5px;line-height:7.80px;color:#333;">Units: Default</div>
<svg style="left:1015px;top:558px" width="8" height="8" viewBox="0 0 8 8"><g fill="#b8b8b8"><rect x="5.5" y="1.5" width="1" height="1"/><rect x="5.5" y="3.5" width="1" height="1"/><rect x="5.5" y="5.5" width="1" height="1"/><rect x="3.5" y="3.5" width="1" height="1"/><rect x="3.5" y="5.5" width="1" height="1"/><rect x="1.5" y="5.5" width="1" height="1"/></g></svg>
</body></html>
